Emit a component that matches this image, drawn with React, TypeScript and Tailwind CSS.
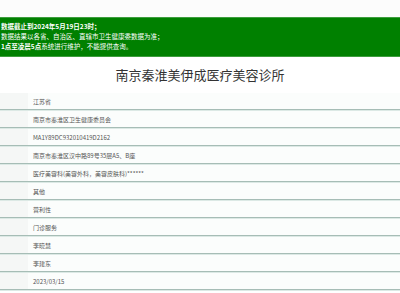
import React from "react";

const rows = [
  "江苏省",
  "南京市秦淮区卫生健康委员会",
  "MA1Y89DC932010419D2162",
  "南京市秦淮区汉中路89号35层A5、B座",
  "医疗美容科(美容外科，美容皮肤科)******",
  "其他",
  "营利性",
  "门诊服务",
  "李晓慧",
  "李建东",
  "2023/03/15",
];

export default function App() {
  return (
    <div
      className="w-[400px] h-[293px] overflow-hidden bg-white"
      style={{ fontFamily: '"Noto Sans CJK SC", "Liberation Sans", sans-serif' }}
    >
      <div className="h-[17px] bg-[#fcfcfc]" />
      <div className="h-[40px] bg-[#008000] border-y border-[#3d9d3d] pt-[3px] pl-[1px] text-white text-[6.5px] leading-[10px]">
        <div className="font-bold whitespace-nowrap">数据截止到2024年5月19日23时；</div>
        <div className="whitespace-nowrap">数据结果以各省、自治区、直辖市卫生健康委数据为准；</div>
        <div className="whitespace-nowrap">
          <span className="font-bold">1点至凌晨5点</span>系统进行维护，不能提供查询。
        </div>
      </div>
      <div className="h-[36px] flex items-center justify-center text-[13px] text-[#333]">
        南京秦淮美伊成医疗美容诊所
      </div>
      {rows.map((r, i) => (
        <div key={i} className="h-[18px] flex flex-col">
          <div className="h-[16px] flex bg-[#fbfdfc]">
            <div className="w-[28px] bg-[#f5f7f6]" />
            <div className="flex-1 flex items-center pl-[5px] text-[6px] text-[#555] whitespace-nowrap">
              {r}
            </div>
          </div>
          <div className="h-px bg-[#a6bdb6]" />
          <div className="h-px bg-[#dce9e5]" />
        </div>
      ))}
    </div>
  );
}
